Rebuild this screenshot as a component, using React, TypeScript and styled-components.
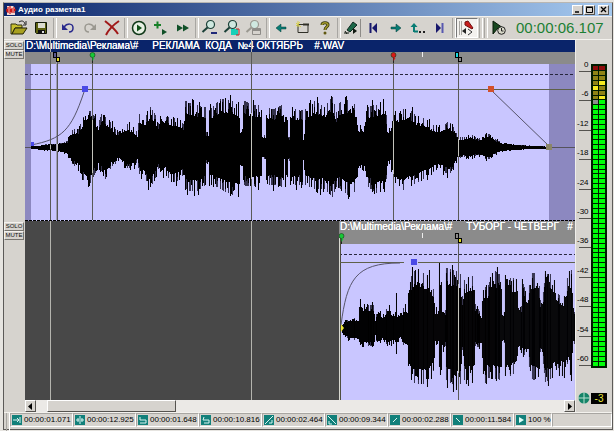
import React from "react";
import styled, { createGlobalStyle, css } from "styled-components";

const face = "#d6d3ce";
const lavender = "#c9c6ff";
const shade = "#8c88c0";
const teal = "#12807a";

const Global = createGlobalStyle`
  * { box-sizing: border-box; }
  body { margin: 0; background: #e6e4e0; font-family: "Liberation Sans", Arial, sans-serif; }
  button { font-family: inherit; padding: 0; margin: 0; }
`;

const raised = css`
  border: 1px solid;
  border-color: #fff #55534f #55534f #fff;
`;

const Desktop = styled.div`
  min-height: 100vh;
  padding: 2px 1px 1px 3px;
  display: flex;
`;

const AppWindow = styled.main`
  flex: 1;
  min-width: 0;
  display: flex;
  flex-direction: column;
  background: ${face};
  border: 1px solid #5c5a58;
  border-top-color: #b8b6b2;
`;

const TitleBar = styled.header`
  height: 13px;
  display: flex;
  align-items: center;
  gap: 2px;
  padding: 0 3px 0 2px;
  background: linear-gradient(to right, #0a246a, #a6caf0);
`;

const Title = styled.h1`
  flex: 1;
  margin: 0;
  color: #fff;
  font-size: 8px;
  line-height: 12px;
  font-weight: 700;
  white-space: nowrap;
`;

const CaptionButtons = styled.div`
  display: flex;
  gap: 1px;
`;

const CaptionButton = styled.button<{ $apart?: boolean }>`
  ${raised}
  width: 11px;
  height: 10px;
  display: grid;
  place-items: center;
  background: ${face};
  margin-left: ${(p) => (p.$apart ? 2 : 0)}px;
`;

const Toolbar = styled.div`
  height: 24px;
  display: flex;
  align-items: center;
  padding-left: 4px;
  border-top: 1px solid #f4f2ee;
  border-bottom: 1px solid #f4f2ee;
`;

const Separator = styled.span`
  width: 5px;
  height: 20px;
  display: flex;
  justify-content: center;
  &::after {
    content: "";
    width: 2px;
    border-left: 1px solid #a8a6a2;
    border-right: 1px solid #fff;
  }
`;

const ToolButton = styled.button<{ $pressed?: boolean }>`
  width: 22px;
  height: 20px;
  display: grid;
  place-items: center;
  background: ${(p) => (p.$pressed ? "#f3f1ee" : "transparent")};
  border: 1px solid;
  border-color: ${(p) => (p.$pressed ? "#777 #fff #fff #777" : "transparent")};
`;

const Clock = styled.output`
  padding-left: 6px;
  color: #1c7f33;
  font-size: 15px;
  line-height: 20px;
  white-space: nowrap;
`;

const Workspace = styled.div`
  flex: 1;
  display: flex;
`;

const Arrangement = styled.section`
  flex: 1;
  min-width: 0;
  display: flex;
  flex-direction: column;
`;

const Tracks = styled.div`
  position: relative;
`;

const TrackRow = styled.div`
  display: flex;
`;

const TrackControls = styled.div`
  width: 21px;
  display: flex;
  flex-direction: column;
  padding-top: 1px;
`;

const TrackButton = styled.button`
  width: 20px;
  height: 9px;
  border: 1px solid;
  border-color: #f4f2ee #77756f #77756f #f4f2ee;
  background: ${face};
  color: #111;
  font-size: 6px;
  line-height: 7px;
  text-align: center;
`;

const Lane = styled.div<{ $start: string }>`
  flex: 1;
  min-width: 0;
  padding-left: ${(p) => p.$start};
  background: #484848;
`;

const ClipTitle = styled.div<{ $active?: boolean }>`
  height: 12px;
  padding-left: 1px;
  overflow: hidden;
  background: ${(p) => (p.$active ? "#0a246a" : "#8b8b8b")};
  color: #fff;
  font-size: 10px;
  line-height: 12px;
  text-shadow: 0 0 0 #fff;
  white-space: pre;
`;

const ClipView = styled.svg<{ $h: number }>`
  display: block;
  position: relative;
  z-index: 2;
  width: 100%;
  height: ${(p) => p.$h}px;
`;

const PlayLines = styled.div`
  position: absolute;
  inset: 0 0 0 21px;
  pointer-events: none;
`;

const PlayLine = styled.i<{ $at: string }>`
  position: absolute;
  top: 0;
  bottom: 0;
  left: ${(p) => p.$at};
  width: 1px;
  background: #b4b4ae;
`;

const ScrollBar = styled.div`
  height: 12px;
  margin-left: 21px;
  display: flex;
  background: #ebe9e6;
`;

const ScrollButton = styled.button`
  ${raised}
  width: 11px;
  height: 12px;
  display: grid;
  place-items: center;
  background: ${face};
`;

const ScrollRail = styled.div`
  flex: 1;
  padding-left: 2%;
  display: flex;
`;

const ScrollThumb = styled.div`
  ${raised}
  width: 25%;
  background: ${face};
`;

const MeterPanel = styled.aside`
  width: 37px;
  padding: 24px 5px 0 1px;
  border-left: 1px solid #efeeea;
  display: flex;
  flex-direction: column;
`;

const MeterBody = styled.div`
  height: 304px;
  display: flex;
`;

const Scale = styled.div`
  flex: 1;
  display: flex;
  flex-direction: column;
  justify-content: space-between;
  height: 323px;
  margin-top: -21px;
`;

const ScaleMark = styled.span`
  flex: 0 0 29px;
  display: flex;
  flex-direction: column;
  justify-content: flex-end;
  align-items: flex-end;
  padding-right: 2px;
  font-size: 8px;
  line-height: 12px;
  color: #000;
  &::after {
    content: "";
    width: 12px;
    height: 1px;
    margin-right: -2px;
    background: #55534f;
  }
`;

const Leds = styled.div`
  width: 17px;
  padding: 2px;
  background: #001c00;
  display: grid;
  grid-template-columns: 1fr 1fr;
  gap: 1px;
`;

const Led = styled.i<{ $c: string }>`
  background: ${(p) => p.$c};
`;

const MeterFoot = styled.div`
  display: flex;
  align-items: center;
  justify-content: flex-end;
  gap: 1px;
  padding-top: 24px;
`;

const Gain = styled.output`
  width: 16px;
  height: 11px;
  background: #000;
  color: #e8e83a;
  font-size: 10px;
  line-height: 11px;
  text-align: center;
`;

const StatusBar = styled.footer`
  height: 17px;
  display: flex;
  padding: 0 0 2px 1px;
  border-top: 1px solid #f4f2ee;
`;

const StatusCell = styled.span<{ $w?: number }>`
  flex: ${(p) => (p.$w ? `0 0 ${p.$w}px` : "1")};
  display: flex;
  align-items: center;
  gap: 2px;
  padding-left: 1px;
  border: 1px solid;
  border-color: #a8a6a2 #fff #fff #a8a6a2;
  font-size: 8px;
  line-height: 12px;
  color: #000;
  white-space: nowrap;
`;

/* Peaks: [x, above centre, below centre] */
type Peak = [number, number, number];

const peaksA: Peak[] = [
  [31, 1, 1], [40, 2, 2], [50, 3, 3], [60, 4, 5], [67, 6, 6], [68, 14, 12], [73, 18, 18], [78, 18, 21],
  [82, 27, 30], [85, 36, 38], [90, 36, 36], [94, 31, 28], [98, 24, 20], [101, 33, 24], [105, 30, 32],
  [111, 24, 20], [115, 18, 17], [118, 15, 12], [122, 21, 18], [127, 23, 21], [133, 20, 20], [137, 14, 15],
  [139, 33, 27], [145, 30, 32], [150, 40, 40], [154, 34, 34], [158, 24, 22], [160, 39, 32], [165, 30, 26],
  [171, 30, 36], [177, 27, 34], [183, 23, 28], [185, 46, 42], [190, 44, 44], [198, 42, 44], [205, 40, 38],
  [206, 15, 16], [208, 15, 17], [209, 37, 36], [220, 48, 42], [231, 47, 48], [239, 40, 50], [240, 20, 16],
  [242, 20, 18], [243, 47, 38], [251, 42, 40], [261, 42, 38], [262, 13, 12], [265, 12, 12], [266, 39, 38],
  [274, 38, 38], [283, 43, 40], [284, 34, 15], [285, 42, 38], [287, 35, 36], [288, 10, 12], [289, 10, 14],
  [290, 38, 38], [302, 37, 38], [303, 10, 14], [304, 14, 22], [305, 38, 38], [314, 46, 42], [324, 40, 42],
  [332, 50, 50], [336, 35, 40], [338, 44, 40], [350, 48, 50], [356, 40, 42], [358, 22, 24], [361, 19, 20],
  [364, 20, 24], [366, 40, 38], [375, 42, 46], [385, 46, 46], [387, 18, 18], [390, 18, 16], [392, 32, 30],
  [395, 34, 40], [400, 36, 44], [408, 40, 40], [416, 30, 36], [424, 29, 31], [430, 24, 28], [437, 20, 20],
  [442, 21, 24], [449, 26, 28], [454, 18, 18], [458, 10, 11], [464, 10, 10], [470, 13, 10], [478, 8, 8],
  [487, 14, 13], [495, 8, 7], [500, 5, 4], [510, 3, 3], [520, 2, 2], [540, 1, 1], [549, 0, 1],
];

const peaksB: Peak[] = [
  [341, 1, 2], [343, 6, 8], [350, 10, 12], [358, 10, 12], [359, 29, 16], [361, 23, 18], [373, 23, 18],
  [375, 8, 8], [377, 20, 18], [383, 13, 12], [388, 23, 18], [394, 12, 14], [395, 15, 15], [396, 46, 34],
  [397, 14, 18], [398, 18, 18], [399, 13, 10], [405, 24, 20], [407, 20, 22], [408, 48, 48], [415, 58, 56],
  [425, 54, 56], [431, 50, 50], [434, 34, 40], [435, 20, 15], [438, 18, 16], [439, 60, 48], [441, 60, 56],
  [442, 22, 22], [445, 18, 18], [446, 60, 52], [455, 58, 58], [460, 54, 56], [462, 32, 22], [464, 48, 52],
  [473, 52, 48], [475, 24, 18], [481, 14, 20], [483, 42, 60], [487, 40, 50], [493, 58, 50], [501, 52, 52],
  [502, 18, 12], [504, 16, 15], [505, 50, 52], [516, 50, 44], [518, 26, 24], [521, 22, 22], [522, 46, 26],
  [528, 32, 28], [530, 54, 50], [538, 56, 54], [540, 28, 24], [543, 36, 36], [545, 54, 54], [552, 54, 50],
  [556, 36, 38], [563, 30, 46], [567, 50, 36], [571, 58, 46], [573, 18, 16], [575, 14, 16],
];

const noise = (n: number) => {
  const v = Math.sin(n * 127.1 + 11.7) * 43758.5453;
  return v - Math.floor(v);
};

const level = (peaks: Peak[], x: number, side: 1 | 2) => {
  const i = Math.max(1, peaks.findIndex((p) => p[0] >= x));
  const a = peaks[i - 1];
  const b = peaks[i];
  return a[side] + ((b[side] - a[side]) * (x - a[0])) / (b[0] - a[0]);
};

function wave(peaks: Peak[], mid: number) {
  let solid = "";
  let tips = "";
  for (let x = peaks[0][0]; x < peaks[peaks.length - 1][0]; x++) {
    const up = level(peaks, x, 1);
    const down = level(peaks, x, 2);
    const u = Math.round(up * (0.72 + 0.42 * noise(x) ** 3));
    const d = Math.round(down * (0.72 + 0.42 * noise(x + 900) ** 3));
    solid += `M${x + 0.5} ${mid - u}V${mid + d + 1}`;
    if (noise(x + 300) > 0.7) tips += `M${x + 0.5} ${mid - Math.round(up)}V${mid + Math.round(down)}`;
  }
  return { solid, tips };
}

function Wave({ peaks, mid }: { peaks: Peak[]; mid: number }) {
  const w = wave(peaks, mid);
  return (
    <g shapeRendering="crispEdges" fill="none">
      <path d={w.tips} stroke="#34324c" />
      <path d={w.solid} stroke="#000" />
    </g>
  );
}

interface LineProps { x: number; top: number; bottom: number; mid: number; peaks: Peak[]; wide?: boolean }

function CueLine({ x, top, bottom, mid, peaks, wide }: LineProps) {
  const u = level(peaks, x, 1) * 0.8;
  const d = level(peaks, x, 2) * 0.8;
  return (
    <g shapeRendering="crispEdges">
      {wide && <rect x={x - 1} y={top} width="1" height={bottom - top} fill="#a09eb8" />}
      <rect x={x} y={top} width="1" height={bottom - top} fill="#5a5a58" />
      <rect x={x} y={mid - u} width="1" height={u + d} fill="#c4c4bc" />
    </g>
  );
}

function Flag({ x, y, first, second }: { x: number; y: number; first: string; second: string }) {
  return (
    <g shapeRendering="crispEdges" stroke="#000">
      <rect x={x - 2.5} y={y + 0.5} width="3" height="5" fill={first} />
      <rect x={x + 0.5} y={y + 5.5} width="3" height="4" fill={second} />
    </g>
  );
}

function Pin({ x, y, color }: { x: number; y: number; color: string }) {
  return (
    <g>
      <path d={`M${x + 0.5} ${y + 3}V${y + 11}`} stroke="#222" />
      <circle cx={x + 0.5} cy={y + 3} r="2.5" fill={color} stroke="#134013" strokeWidth="0.6" />
      <path d={`M${x + 0.5} ${y + 5}l2 1l-2 3z`} fill={color} />
    </g>
  );
}

function ClipOne() {
  const line = { top: 62, bottom: 220, mid: 147, peaks: peaksA };
  return (
    <ClipView $h={169} viewBox="25 52 550 169" preserveAspectRatio="none" role="img" aria-label="РЕКЛАМА КОДА">
      <rect x="25" y="52" width="550" height="12" fill="#8b8b8b" />
      <rect x="25" y="64" width="550" height="157" fill={lavender} />
      <rect x="25" y="64" width="6" height="157" fill={shade} />
      <rect x="549" y="64" width="26" height="157" fill={shade} />
      <path d="M25 74.5H575" stroke="#26263c" strokeDasharray="3 2" />
      <path d="M25 147.5H575" stroke="#55535c" />
      <Wave peaks={peaksA} mid={147} />
      <CueLine {...line} x={50} top={52} />
      <CueLine {...line} x={57} wide />
      <CueLine {...line} x={92} />
      <CueLine {...line} x={251} top={52} />
      <CueLine {...line} x={393} />
      <CueLine {...line} x={458} />
      <path d="M25 89.5H575" stroke="#5e6048" />
      <path d="M31 145C62 139 71 131 84 92M491 90L549 146" stroke="#56546a" fill="none" />
      <rect x="82" y="86" width="6" height="6" fill="#4a4ae6" />
      <rect x="31" y="142" width="3" height="4" fill="#4a4ae6" />
      <rect x="488" y="86" width="6" height="6" fill="#d2502a" />
      <rect x="546" y="144" width="6" height="6" fill="#8b8668" />
      <path d="M25 220.5H575" stroke="#000" strokeDasharray="3 1" />
      <rect x="422" y="52" width="1" height="5" fill="#eee" />
      <Flag x={56} y={52} first="#5a5a90" second="#e8e020" />
      <Flag x={458} y={52} first="#18d8e0" second="#8b8b8b" />
      <Pin x={92} y={52} color="#18c838" />
      <Pin x={393} y={52} color="#d81818" />
    </ClipView>
  );
}

function ClipTwo() {
  return (
    <ClipView $h={167} viewBox="339 233 236 167" preserveAspectRatio="none" role="img" aria-label="ТУБОРГ - ЧЕТВЕРГ">
      <rect x="339" y="233" width="236" height="11" fill="#8b8b8b" />
      <rect x="339" y="244" width="236" height="156" fill={lavender} />
      <path d="M339 254.5H575" stroke="#26263c" strokeDasharray="3 2" />
      <Wave peaks={peaksB} mid={328} />
      <rect x="339" y="238" width="1" height="162" fill="#d8d8d0" />
      <rect x="340" y="238" width="1" height="162" fill="#4e4e40" />
      <CueLine x={458} top={242} bottom={400} mid={328} peaks={peaksB} />
      <path d="M340 262.5H404M418 262.5H575" stroke="#5e6048" />
      <path d="M341 325C347 280 355 263 400 263" stroke="#56546a" fill="none" />
      <rect x="411" y="259" width="6" height="6" fill="#4a4ae6" />
      <path d="M341 324l3 4l-3 4z" fill="#f0e838" />
      <rect x="422" y="233" width="1" height="5" fill="#eee" />
      <Flag x={458} y={233} first="#8b8b8b" second="#e8e020" />
      <Pin x={341} y={233} color="#18c838" />
    </ClipView>
  );
}

const Icon = ({ children }: { children: React.ReactNode }) => (
  <svg width="18" height="18" viewBox="0 0 18 18" fill="none" aria-hidden="true">{children}</svg>
);

const lens = (c: string) => (
  <>
    <circle cx="9.5" cy="5.5" r="4" fill="#cfe8e0" stroke={c} strokeWidth="1.2" />
    <path d="M6.5 8.5L1.5 13" stroke={c} strokeWidth="2" />
  </>
);

const icons: Record<string, React.ReactNode> = {
  open: <><path d="M1 5h5l1 1h5v3H5l-3 6H1z" fill="#c8c030" stroke="#333310" /><path d="M2 15l3-6h12l-4 6z" fill="#a8a020" stroke="#222208" /><path d="M9 3c3-2 5-1 6 2M16 2v4h-3" stroke="#222" /></>,
  save: <><path d="M3.500 3.500h11v11h-10l-1-1z" fill="#5c6010" stroke="#101808" /><path d="M6 4h7v5H6z" fill="#dcdcd0" /><path d="M6 11h7v4H6z" fill="#111" /><path d="M10 12h2v2h-2z" fill="#ddd" /></>,
  undo: <><path d="M5 8c3-4 9-4 9 1c0 3-2 4-4 4" stroke="#28288c" strokeWidth="1.500" /><path d="M3 5v6h6z" fill="#28288c" /></>,
  redo: <><path d="M13 8C10 4 4 4 4 9c0 3 2 4 4 4" stroke="#9a9890" strokeWidth="1.500" /><path d="M15 5v6H9z" fill="#9a9890" /></>,
  cut: <path d="M2 2c5 4 10 8 13 13M16 2C10 6 6 10 3 16" stroke="#a01818" strokeWidth="2" />,
  play: <><circle cx="9" cy="9" r="6.500" fill="#e8f0e4" stroke="#103818" strokeWidth="1.500" /><path d="M7 5.500v7l5-3.500z" fill="#105018" /></>,
  plus: <><path d="M2 6h7M5.500 2.500v7" stroke="#188028" strokeWidth="2" /><path d="M10 10v6l5-3z" fill="#105028" /></>,
  forward: <path d="M3 5.500v7l6-3.500zM9 5.500v7l6-3.500z" fill="#105028" />,
  zoomOut: <>{lens("#1c4038")}<path d="M10 14h6" stroke="#202878" strokeWidth="2" /></>,
  zoomRange: <>{lens("#1c4038")}<path d="M8 10h7v6H8z" fill="#18d0b8" /><path d="M13 10h3v6h-3" stroke="#c02020" /></>,
  zoomWindow: <>{lens("#9a9890")}<path d="M7.500 9.500h8v6h-8z" fill="#d6d3ce" stroke="#8e8c88" /><path d="M7 11h9" stroke="#8e8c88" strokeWidth="2" /></>,
  left: <path d="M4 9l5-4v3h5v2H9v3z" fill="#087c74" stroke="#043c38" strokeWidth="0.500" />,
  right: <path d="M14 9L9 5v3H4v2h5v3z" fill="#087c74" stroke="#043c38" strokeWidth="0.500" />,
  label: <><path d="M4 5.500h10v8H4z" stroke="#303028" /><path d="M2 4l5 4M4 2v6M2 7l4-4" stroke="#d8d048" /><path d="M9 5.500h6" stroke="#303028" strokeWidth="2" /></>,
  help: <><path d="M6 6c0-3 6-3 6 0c0 2-3 2-3 5" stroke="#303008" strokeWidth="3" /><path d="M6 6c0-3 6-3 6 0c0 2-3 2-3 5" stroke="#a0982c" strokeWidth="1.500" /><circle cx="9" cy="14" r="1.500" fill="#605810" /></>,
  micGreen: <><path d="M4 11L10 3l4 3l-7 7z" fill="#1c6848" stroke="#102820" /><path d="M2 12l2 3M1 14h5" stroke="#101810" /><path d="M10 9v6l4-3z" fill="#101810" /><path d="M17.500 0v18" stroke="#8e8c88" /></>,
  start: <><path d="M5.500 4v10" stroke="#18186c" strokeWidth="2" /><path d="M12 4v10L7 9z" fill="#18186c" /></>,
  up: <><path d="M5 13V7M5 12.500h4" stroke="#087c74" strokeWidth="2" /><path d="M1.500 8L5 4l3.500 4z" fill="#087c74" /><path d="M10 13h2M14 13h2" stroke="#202020" strokeWidth="2" /></>,
  end: <><path d="M11.500 4v10" stroke="#5858b0" strokeWidth="2" /><path d="M5 4v10l5-5z" fill="#18186c" /></>,
  micRed: <><path d="M3.500 2v14M1.500 2v14" stroke="#a8a6a2" /><path d="M7 3l3-1l5 7l-1 1l-7-4z" fill="#c81c1c" stroke="#701010" /><path d="M8 9v6l-4-3z" fill="#222" /><path d="M10 10l4 3l-4 3" stroke="#333" /></>,
  playClock: <><path d="M3 2l10 7H8l-5 6z" fill="#184820" stroke="#081808" /><circle cx="11.500" cy="11.500" r="3.800" fill="#d8d8c8" stroke="#222" /><path d="M11.500 9v3h2" stroke="#222" /></>,
};

const toolGroups: [string, string][][] = [
  [["open", "Открыть"], ["save", "Сохранить"]],
  [["undo", "Отменить"], ["redo", "Вернуть"], ["cut", "Удалить"]],
  [["play", "Играть"], ["plus", "Добавить"], ["forward", "Вперёд"]],
  [["zoomOut", "Уменьшить"], ["zoomRange", "Масштаб выделения"], ["zoomWindow", "Масштаб окна"]],
  [["left", "Влево"], ["label", "Метка"], ["help", "Справка"]],
  [["micGreen", "Микрофон"], ["start", "В начало"], ["right", "Вправо"], ["up", "Вверх"], ["end", "В конец"]],
];

const times: [string, string][] = [
  ["00:00:01.071", "M1 5h6M5 3l2 2l-2 2M8 2v6"],
  ["00:00:12.925", "M5 1v8M1 5h3M6 5h3M3 3v4M7 3v4"],
  ["00:00:01.648", "M2 2v3h6M2 8h6V5"],
  ["00:00:10.816", "M3 2L2 5h6M3 8h5V5"],
  ["00:00:02.464", "M1 9L9 1M5 8h3V5"],
  ["00:00:09.344", "M1 1l8 8M2 6v3h3"],
  ["00:00:02.288", "M3 7l4-4"],
  ["00:00:11.584", "M3 3l4 4"],
];

const ledColor = (row: number, right: boolean) => {
  if (row === 0) return "#8c0c0c";
  if (right ? row === 3 || row === 6 : row === 4) return "#f4ec20";
  if (row < 7) return "#8e8414";
  if (row === 7 && !right) return "#8c8c8c";
  return "#00ff08";
};

const rows = Array.from({ length: 61 }, (_, i) => i);
const marks = Array.from({ length: 11 }, (_, i) => (i === 0 ? "0" : `-${i * 6}`));

function TrackButtons() {
  return (
    <TrackControls>
      <TrackButton type="button">SOLO</TrackButton>
      <TrackButton type="button">MUTE</TrackButton>
    </TrackControls>
  );
}

export default function App() {
  return (
    <>
      <Global />
      <Desktop>
        <AppWindow>
          <TitleBar>
            <svg width="10" height="10" viewBox="0 0 10 10" aria-hidden="true">
              <path d="M1 1h6l2 2v7H1z" fill="#f0d8d4" />
              <path d="M0 5h1M2 2v6M4 1v8M6 3v5M8 2v6M1 4v3M5 4v3M9 4v2" stroke="#d01818" strokeWidth="1.2" />
            </svg>
            <Title>Аудио разметка1</Title>
            <CaptionButtons>
              <CaptionButton type="button" aria-label="Свернуть">
                <svg width="7" height="7"><path d="M1 6h4" stroke="#000" strokeWidth="1.5" /></svg>
              </CaptionButton>
              <CaptionButton type="button" aria-label="Развернуть">
                <svg width="7" height="7"><path d="M0.500 1.500h6v5h-6zM0 1h7" stroke="#000" fill="none" /></svg>
              </CaptionButton>
              <CaptionButton type="button" aria-label="Закрыть" $apart>
                <svg width="7" height="7"><path d="M1 1l5 5M6 1L1 6" stroke="#000" strokeWidth="1.300" /></svg>
              </CaptionButton>
            </CaptionButtons>
          </TitleBar>
          <Toolbar role="toolbar">
            {toolGroups.map((group, i) => (
              <React.Fragment key={i}>
                {group.map(([id, label]) => (
                  <ToolButton key={id} type="button" aria-label={label}><Icon>{icons[id]}</Icon></ToolButton>
                ))}
                <Separator />
              </React.Fragment>
            ))}
            <ToolButton type="button" $pressed aria-pressed="true" aria-label="Запись"><Icon>{icons.micRed}</Icon></ToolButton>
            <Separator />
            <Separator />
            <ToolButton type="button" aria-label="Таймер"><Icon>{icons.playClock}</Icon></ToolButton>
            <Clock>00:00:06.107</Clock>
          </Toolbar>
          <Workspace>
            <Arrangement>
              <Tracks>
                <TrackRow>
                  <TrackButtons />
                  <Lane $start="0">
                    <ClipTitle $active>{"D:\\Multimedia\\Реклама\\#     РЕКЛАМА  КОДА  №4 ОКТЯБРЬ    #.WAV"}</ClipTitle>
                    <ClipOne />
                  </Lane>
                </TrackRow>
                <TrackRow>
                  <TrackButtons />
                  <Lane $start="55%">
                    <ClipTitle>{"D:\\Multimedia\\Реклама\\#     ТУБОРГ - ЧЕТВЕРГ   #"}</ClipTitle>
                    <ClipTwo />
                  </Lane>
                </TrackRow>
                <PlayLines>
                  <PlayLine $at="4.6%" />
                  <PlayLine $at="41.1%" />
                </PlayLines>
              </Tracks>
              <ScrollBar>
                <ScrollButton type="button" aria-label="Прокрутить влево">
                  <svg width="5" height="7"><path d="M4 0v7L0 3.500z" fill="#000" /></svg>
                </ScrollButton>
                <ScrollRail><ScrollThumb /></ScrollRail>
                <ScrollButton type="button" aria-label="Прокрутить вправо">
                  <svg width="5" height="7"><path d="M1 0v7l4-3.500z" fill="#000" /></svg>
                </ScrollButton>
              </ScrollBar>
            </Arrangement>
            <MeterPanel>
              <MeterBody>
                <Scale>
                  {marks.map((m) => <ScaleMark key={m}>{m}</ScaleMark>)}
                </Scale>
                <Leds>
                  {rows.map((r) => (
                    <React.Fragment key={r}>
                      <Led $c={ledColor(r, false)} />
                      <Led $c={ledColor(r, true)} />
                    </React.Fragment>
                  ))}
                </Leds>
              </MeterBody>
              <MeterFoot>
                <svg width="12" height="12" viewBox="0 0 12 12" aria-hidden="true">
                  <circle cx="6" cy="6" r="5.500" fill="#148468" />
                  <path d="M6 0v12M0 6h12" stroke="#b8e0d0" />
                </svg>
                <Gain>-3</Gain>
              </MeterFoot>
            </MeterPanel>
          </Workspace>
          <StatusBar>
            <Separator />
            {times.map(([t, d]) => (
              <StatusCell key={t} $w={63}>
                <svg width="10" height="10" viewBox="0 0 10 10" aria-hidden="true">
                  <rect width="10" height="10" fill={teal} />
                  <path d={d} stroke="#d8f4f0" fill="none" />
                </svg>
                {t}
              </StatusCell>
            ))}
            <StatusCell $w={35}>
              <svg width="10" height="10" viewBox="0 0 10 10" aria-hidden="true">
                <rect width="10" height="10" fill={teal} />
                <path d="M3 2v6l5-3z" fill="#e0fffa" />
              </svg>
              100 %
            </StatusCell>
            <StatusCell />
          </StatusBar>
        </AppWindow>
      </Desktop>
    </>
  );
}
